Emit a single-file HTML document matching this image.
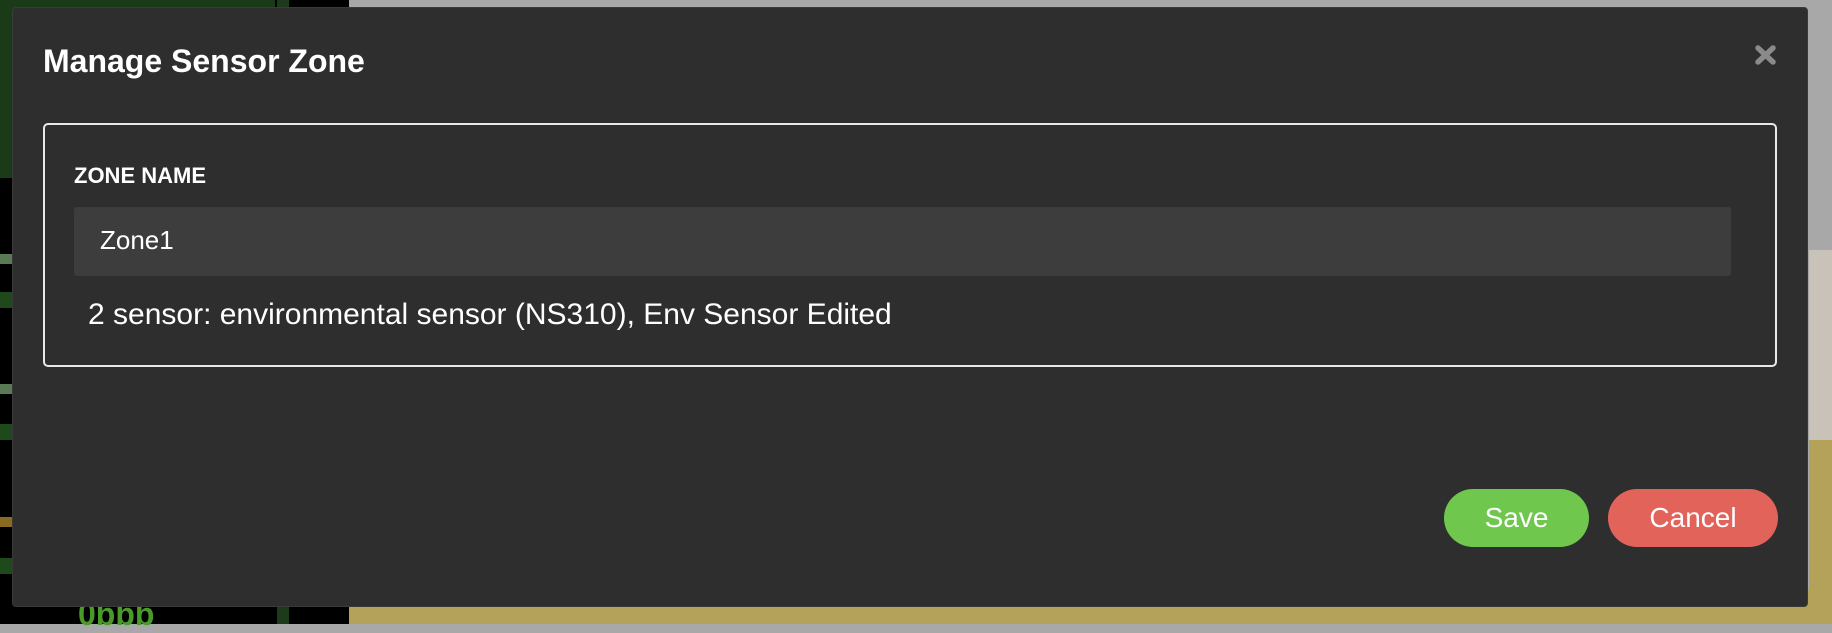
<!DOCTYPE html>
<html><head><style>
body{margin:0;width:1832px;height:624px;overflow:hidden;position:relative;background:#a8a8a8;font-family:"Liberation Sans",Arial,sans-serif}
.abs{position:absolute}
</style></head><body>
<div class="abs" style="left:0;top:0;width:349px;height:624px;background:#000"></div>
<div class="abs" style="left:0;top:0;width:275px;height:178px;background:#1b3a17"></div>
<div class="abs" style="left:277px;top:0;width:12px;height:624px;background:#1d3a1a"></div>
<div class="abs" style="left:0;top:254px;width:12px;height:10px;background:#5a7a55"></div>
<div class="abs" style="left:0;top:292px;width:12px;height:16px;background:#1e4a1b"></div>
<div class="abs" style="left:0;top:384px;width:12px;height:10px;background:#5a7a55"></div>
<div class="abs" style="left:0;top:424px;width:12px;height:16px;background:#1e4a1b"></div>
<div class="abs" style="left:0;top:517px;width:12px;height:10px;background:#8a6a20"></div>
<div class="abs" style="left:0;top:558px;width:12px;height:16px;background:#1e4a1b"></div>
<div class="abs" style="left:78px;top:596px;font-weight:bold;font-size:32px;color:#4a9a2a">0bbb</div>
<div class="abs" style="left:349px;top:590px;width:1483px;height:34px;background:#b5a25a"></div>
<div class="abs" style="left:1809px;top:250px;width:23px;height:190px;background:#c9c2b8"></div>
<div class="abs" style="left:1809px;top:440px;width:23px;height:184px;background:#b5a25a"></div>
<div class="abs" style="left:12px;top:7px;width:1796px;height:600px;background:#2e2e2e;border-radius:4px;border:1px solid #3a3a3a;box-sizing:border-box"></div>
<div class="abs" style="left:43px;top:43px;font-size:32px;line-height:36px;font-weight:bold;color:#fff">Manage Sensor Zone</div>
<svg class="abs" style="left:1754px;top:44px" width="23" height="22" viewBox="0 0 23 22"><path d="M4 4L19 18M19 4L4 18" stroke="#8a8a8a" stroke-width="5.5" stroke-linecap="round"/></svg>
<div class="abs" style="left:43px;top:123px;width:1734px;height:244px;border:2px solid #e8e8e8;border-radius:5px;box-sizing:border-box"></div>
<div class="abs" style="left:74px;top:163px;font-size:22px;line-height:26px;font-weight:bold;color:#fff">ZONE NAME</div>
<div class="abs" style="left:74px;top:207px;width:1657px;height:69px;background:#3d3d3d;border-radius:3px"></div>
<div class="abs" style="left:100px;top:224px;font-size:26px;line-height:32px;color:#fff">Zone1</div>
<div class="abs" style="left:88px;top:298px;font-size:30px;line-height:34px;color:#fff">2 sensor: environmental sensor (NS310), Env Sensor Edited</div>
<div class="abs" style="left:1444px;top:489px;width:145px;height:58px;background:#6fc74e;border-radius:29px;color:#fff;font-size:28px;text-align:center;line-height:58px">Save</div>
<div class="abs" style="left:1608px;top:489px;width:170px;height:58px;background:#e2635a;border-radius:29px;color:#fff;font-size:28px;text-align:center;line-height:58px">Cancel</div>
</body></html>
